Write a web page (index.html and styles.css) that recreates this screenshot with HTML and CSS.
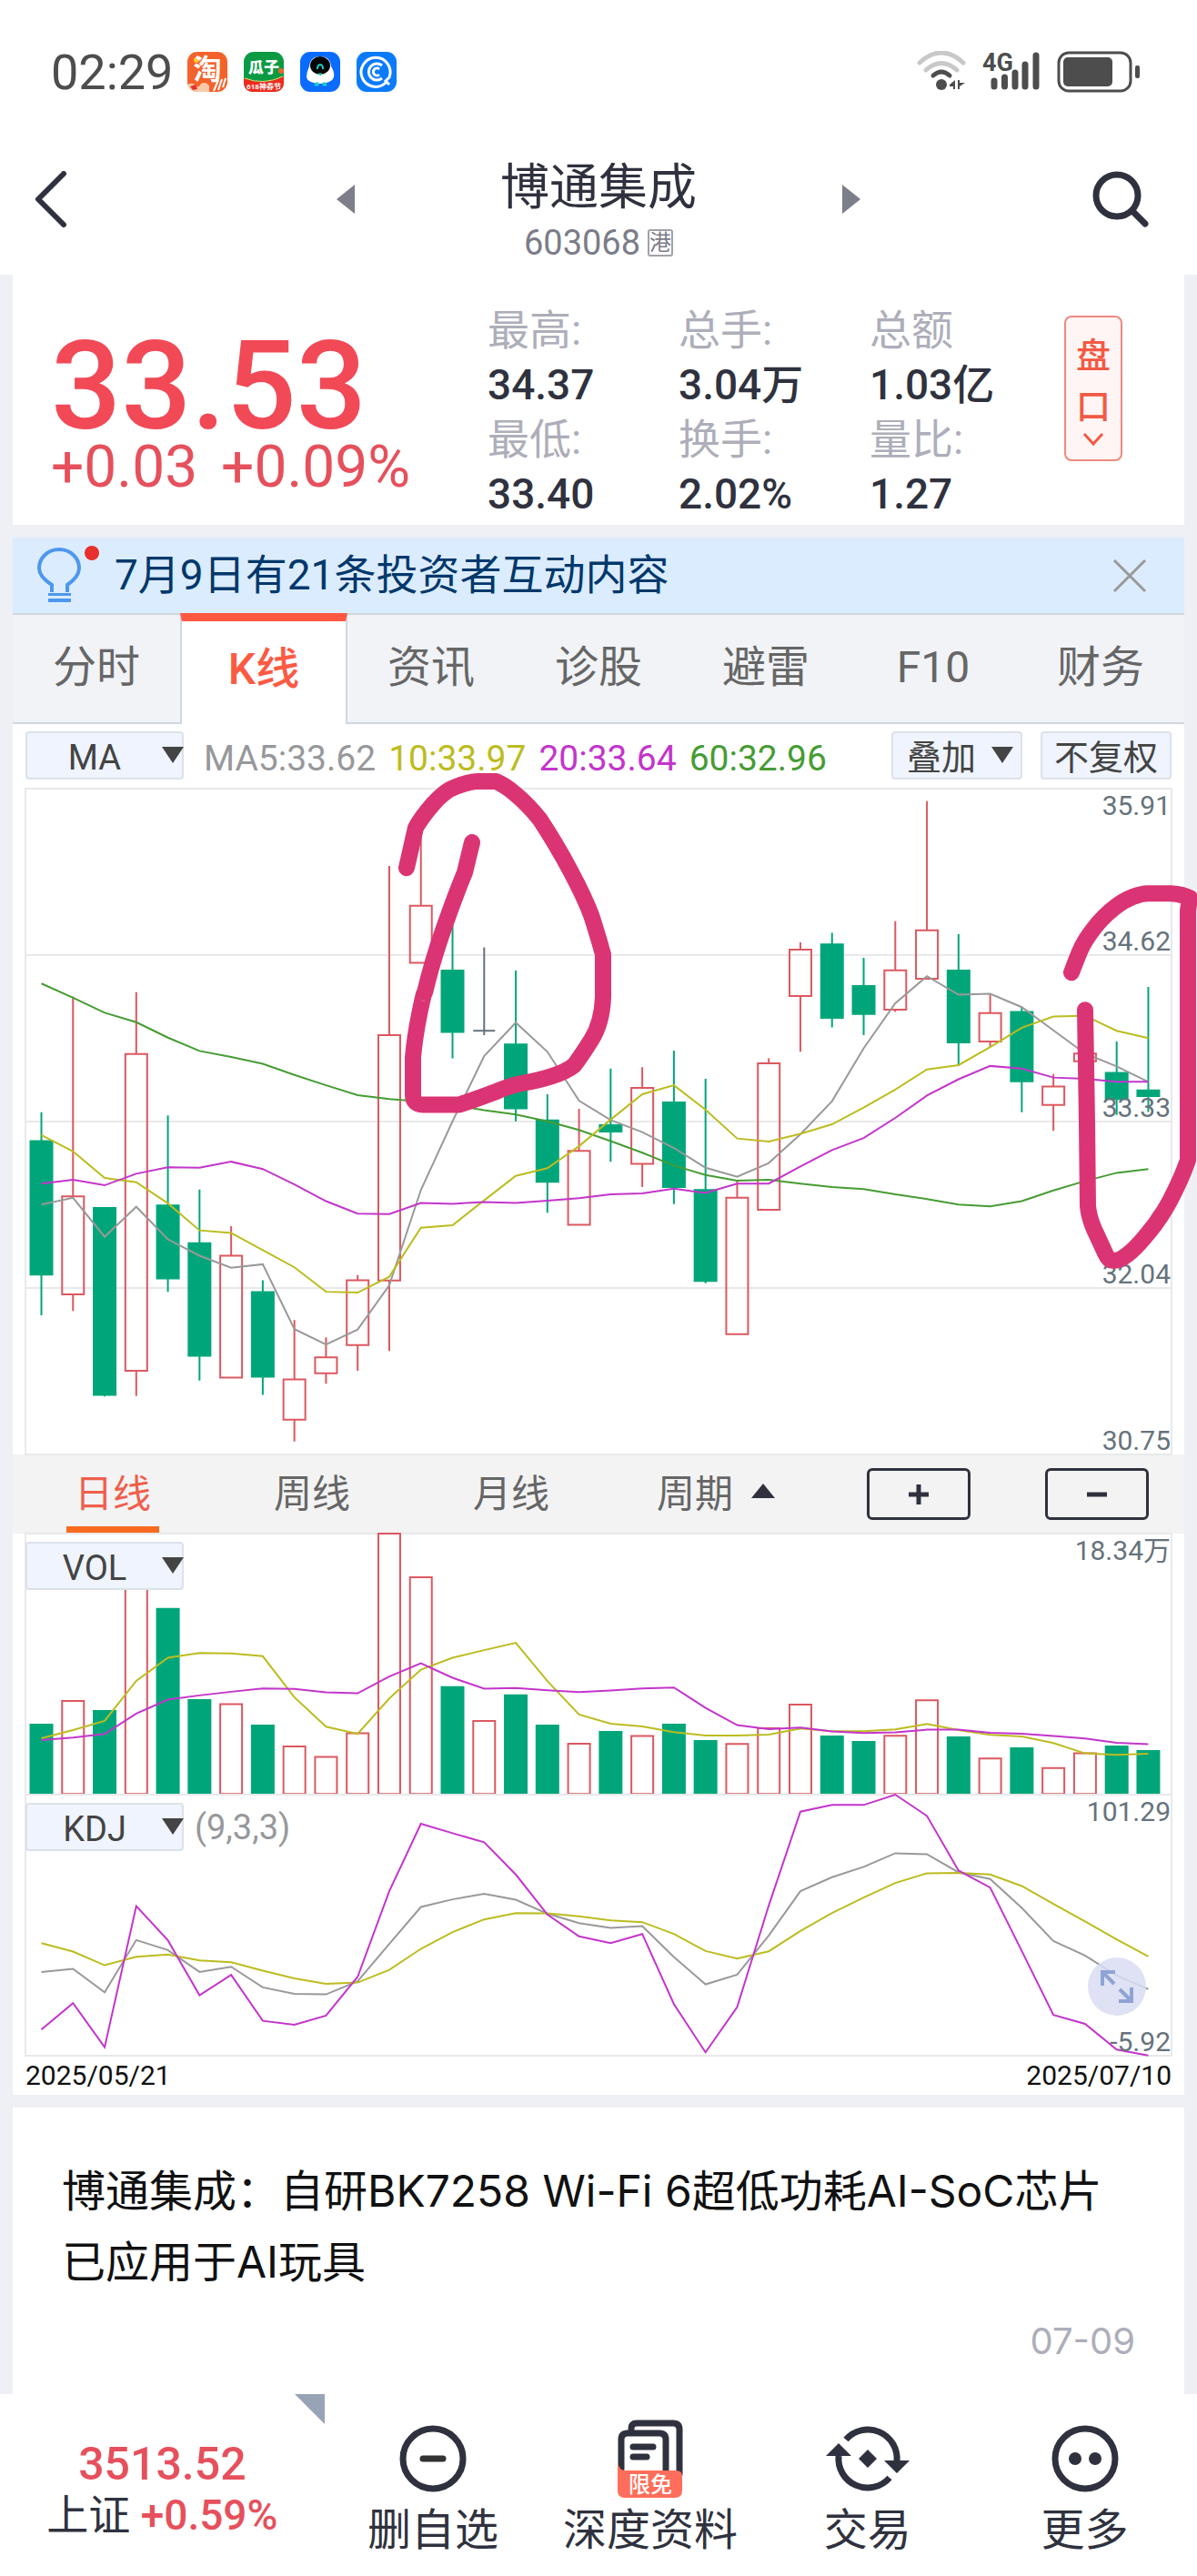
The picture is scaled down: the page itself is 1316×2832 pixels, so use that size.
FILE: index.html
```html
<!DOCTYPE html>
<html lang="zh-CN">

<head>
    <meta charset="UTF-8">
    <meta name="viewport" content="width=device-width, initial-scale=1">
    <title>博通集成 603068</title>
    <link rel="stylesheet" href="styles.css">
</head>

<body>
    <header class="top">
        <div class="status-bar">
            <span class="clock">02:29</span>
            <div class="app-icons">
                <svg width="44" height="44" viewBox="0 0 44 44">
                    <rect width="44" height="44" rx="11" fill="#f4622c"/>
                    <circle cx="10" cy="9" r="3" fill="#ffc928"/>
                    <text x="22" y="30" text-anchor="middle" font-size="31" font-weight="700" fill="#fff">淘</text>
                    <path d="M0 36q6-3 9 1t6-2q5-3 9 2v7H11Q3 44 0 36z" fill="#f8c9a8"/>
                    <path d="M3 38l6-2 2 5-5 1z" fill="#e5322b"/>
                    <path d="M29 43l5-12M34 42l4-12M39 39l3-10" stroke="#fff" stroke-width="2"/>
                </svg>
                <svg width="44" height="44" viewBox="0 0 44 44">
                    <rect width="44" height="44" rx="11" fill="#0a9a43"/>
                    <path d="M0 29q22 9 44-2v6q0 11-11 11H11Q0 44 0 33z" fill="#ee2b1f"/>
                    <path d="M1 29q21 8 42-2" fill="none" stroke="#f3d66a"/>
                    <circle cx="41" cy="21" r="3" fill="#f0642b"/>
                    <text x="22" y="23" text-anchor="middle" font-size="17" font-weight="900" fill="#fff">瓜子</text>
                    <text x="22" y="41" text-anchor="middle" font-size="8" font-weight="700" fill="#fff">618神券节</text>
                </svg>
                <svg width="44" height="44" viewBox="0 0 44 44">
                    <rect width="44" height="44" rx="11" fill="#0a6cff"/>
                    <path d="M10 16Q11 5 22 5t12 11q4 6 3 12-2 6-15 7Q8 34 7 28q0-6 3-12z" fill="#fff"/>
                    <ellipse cx="22" cy="15" rx="11" ry="10" fill="#050505"/>
                    <path d="M19 19q0-5 3-5t3 5" fill="none" stroke="#18cfc4" stroke-width="2"/>
                    <path d="M20 24h4l-2 2zM17 34h3v3h-4zM25 34h3l1 3h-4z" fill="#18cfc4" stroke="#18cfc4"/>
                </svg>
                <svg width="44" height="44" viewBox="0 0 44 44">
                    <rect width="44" height="44" rx="11" fill="#0b7bfb"/>
                    <g fill="none" stroke="#fff" stroke-width="3">
                        <path d="M32 34A16 16 0 1 1 36 28L32 32l4 4"/>
                        <path d="M28 29a9 9 0 1 1 0-14"/>
                        <path d="M25 25a4 4 0 1 1 0-6"/>
                    </g>
                </svg>
            </div>
            <div class="signal">
                <svg width="54" height="44" viewBox="0 0 54 44">
                    <g fill="none" stroke-width="5" stroke-linecap="round">
                        <path d="M3 13q24-22 48 0" stroke="#c8c8c8"/>
                        <path d="M10 21q17-15 34 0" stroke="#c8c8c8"/>
                        <path d="M18 27q9-8 18 0" stroke="#4d4d4d"/>
                    </g>
                    <circle cx="27" cy="37" r="6" fill="#4d4d4d"/>
                    <path d="M42 32v10h-2v-3h-4v-2zM45 32v10h2v-3l6-4h-6v-3z" fill="#4d4d4d"/>
                </svg>
                <svg class="net" width="64" height="44" viewBox="0 0 64 44">
                    <text x="0" y="22" font-size="27" font-weight="700" fill="#4d4d4d">4G</text>
                    <path d="M13 33v6M24.500 29v10M36 24v15M47 15v24M59 5v34" stroke="#4d4d4d" stroke-width="7" stroke-linecap="round"/>
                </svg>
                <svg width="92" height="46" viewBox="0 0 92 46">
                    <rect x="2" y="2" width="79" height="42" rx="11" fill="none" stroke="#4d4d4d" stroke-width="3"/>
                    <rect x="7" y="7" width="54" height="32" rx="5" fill="#4d4d4d"/>
                    <rect x="86" y="16" width="5" height="14" rx="2" fill="#4d4d4d"/>
                </svg>
            </div>
        </div>
        <div class="title-bar">
            <button class="icon-btn" aria-label="返回">
                <svg width="36" height="62" viewBox="0 0 36 62"><path d="M32 3L4 31l28 28" fill="none" stroke="#2f323e" stroke-width="6" stroke-linecap="round" stroke-linejoin="round"/></svg>
            </button>
            <div class="switcher">
                <button class="icon-btn" aria-label="上一只">
                    <svg width="20" height="32" viewBox="0 0 20 32"><path d="M20 0v32L0 16z" fill="#7c7e8a"/></svg>
                </button>
                <div class="stock">
                    <h1>博通集成</h1>
                    <p>603068<span class="hk-tag">港</span></p>
                </div>
                <button class="icon-btn" aria-label="下一只">
                    <svg width="20" height="32" viewBox="0 0 20 32"><path d="M0 0v32l20-16z" fill="#7c7e8a"/></svg>
                </button>
            </div>
            <button class="icon-btn search" aria-label="搜索">
                <svg width="64" height="64" viewBox="0 0 64 64"><g fill="none" stroke="#2f323e" stroke-width="7" stroke-linecap="round"><circle cx="28" cy="28" r="23"/><path d="M45 45l14 14"/></g></svg>
            </button>
        </div>
    </header>

    <main>
        <section class="card quote">
            <div class="price">
                <strong>33.53</strong>
                <p><span>+0.03</span><span>+0.09%</span></p>
            </div>
            <div class="stats">
                <dl>
                    <dt>最高:</dt><dd>34.37</dd>
                    <dt>最低:</dt><dd>33.40</dd>
                </dl>
                <dl>
                    <dt>总手:</dt><dd>3.04万</dd>
                    <dt>换手:</dt><dd>2.02%</dd>
                </dl>
                <dl>
                    <dt>总额</dt><dd>1.03亿</dd>
                    <dt>量比:</dt><dd>1.27</dd>
                </dl>
            </div>
            <button class="pankou">
                <span>盘</span><span>口</span>
                <svg width="24" height="16" viewBox="0 0 24 16"><path d="M2 2l10 11L22 2" fill="none" stroke="#f25a45" stroke-width="3"/></svg>
            </button>
        </section>

        <section class="card market">
            <div class="notice">
                <svg class="bulb" width="70" height="66" viewBox="0 0 70 66">
                    <path d="M17 51v-8Q3 34 3 24.500a22 20.500 0 0 1 44 0Q47 34 34 43v8" fill="none" stroke="#4d97ee" stroke-width="4"/>
                    <path d="M13 52h25v3H13zM13 58h25v4H13z" fill="#4d97ee"/>
                    <circle cx="61" cy="8" r="8" fill="#e72f2d"/>
                </svg>
                <a href="#">7月9日有21条投资者互动内容</a>
                <button class="icon-btn" aria-label="关闭">
                    <svg width="38" height="38" viewBox="0 0 38 38"><path d="M2 2l34 34M36 2L2 36" stroke="#999" stroke-width="3"/></svg>
                </button>
            </div>
            <nav class="tabs">
                <a href="#">分时</a>
                <a href="#" class="active">K线</a>
                <a href="#">资讯</a>
                <a href="#">诊股</a>
                <a href="#">避雷</a>
                <a href="#">F10</a>
                <a href="#">财务</a>
            </nav>

            <div class="ma-row">
                <label class="picker"><select aria-label="主图指标"><option>MA</option></select></label>
                <p class="ma-values">
                    <span class="c-grey">MA5:33.62</span>
                    <span class="c-yellow">10:33.97</span>
                    <span class="c-purple">20:33.64</span>
                    <span class="c-green">60:32.96</span>
                </p>
                <label class="picker picker-small"><select aria-label="叠加"><option>叠加</option></select></label>
                <button class="chip">不复权</button>
            </div>

            <div class="chart chart-k">
                <svg class="plot" id="kline" viewBox="0 15 1260 1551" preserveAspectRatio="none"></svg>
                <div class="scale">
                    <span>35.91</span><span>34.62</span><span>33.33</span><span>32.04</span><span>30.75</span>
                </div>
                <svg class="marker" viewBox="28 867 1260 731" preserveAspectRatio="none">
                    <path d="M447 954L457 910Q463 899 476 884T501 865Q516 859 526 859H545Q555 863 568 874T593 900Q611 927 627 957T650 1006Q657 1027 663 1049V1096Q662 1124 650 1143T631 1171Q622 1178 606 1183T577 1190T547 1199Q526 1207 505 1214H465Q454 1214 454 1203V1162Q456 1140 461 1115T467 1091Q475 1057 488 1020T511 959L519 926"/>
                    <path d="M1178 1069Q1182 1058 1187 1046T1203 1020T1226 997Q1235 990 1245 986T1262 982H1287Q1301 983 1308 987L1306 1001V1275Q1299 1295 1287 1318T1258 1360Q1248 1372 1239 1379T1224 1385Q1219 1386 1215 1377T1203 1351Q1197 1337 1196 1325L1195 1233L1193 1110"/>
                </svg>
            </div>

            <div class="periods">
                <button class="active">日线</button>
                <button>周线</button>
                <button>月线</button>
                <button class="more">周期<svg width="26" height="16" viewBox="0 0 26 16"><path d="M13 0l13 16H0z" fill="#2f323e"/></svg></button>
                <div class="zoom">
                    <button aria-label="放大"><svg width="24" height="24" viewBox="0 0 24 24"><path d="M12 1v22M1 12h22" stroke="#2f323e" stroke-width="5"/></svg></button>
                    <button aria-label="缩小"><svg width="24" height="24" viewBox="0 0 24 24"><path d="M1 12h22" stroke="#2f323e" stroke-width="5"/></svg></button>
                </div>
            </div>

            <div class="chart chart-sub">
                <svg class="plot" id="vol" viewBox="0 289 1260 860" preserveAspectRatio="none"></svg>
                <div class="sub-head"><label class="picker"><select aria-label="副图指标一"><option>VOL</option></select></label></div>
                <div class="scale"><span>18.34万</span></div>
            </div>
            <div class="chart chart-sub">
                <svg class="plot" id="kdj" viewBox="0 10 1260 860" preserveAspectRatio="none"></svg>
                <div class="sub-head">
                    <label class="picker"><select aria-label="副图指标二"><option>KDJ</option></select></label>
                    <span class="c-grey">(9,3,3)</span>
                </div>
                <button class="expand" aria-label="全屏">
                    <svg width="38" height="38" viewBox="0 0 38 38"><path d="M3 18V3h14M4 4l12 12M35 20v15H21M34 34L22 22" fill="none" stroke="#8fa3d4" stroke-width="4"/></svg>
                </button>
                <div class="scale"><span>101.29</span><span>-5.92</span></div>
            </div>
            <div class="dates"><time>2025/05/21</time><time>2025/07/10</time></div>
        </section>

        <article class="card news">
            <h2>博通集成：自研BK7258 Wi-Fi 6超低功耗AI-SoC芯片已应用于AI玩具</h2>
            <time>07-09</time>
        </article>
    </main>

    <footer class="bottom-bar">
        <a href="#" class="index">
            <strong>3513.52</strong>
            <span>上证 <em>+0.59%</em></span>
        </a>
        <button>
            <svg width="74" height="86" viewBox="0 0 74 86"><circle cx="37" cy="43" r="33" fill="none" stroke="#2f323e" stroke-width="7"/><path d="M26 43h22" stroke="#333" stroke-width="7" stroke-linecap="round"/></svg>
            删自选
        </button>
        <button>
            <svg width="72" height="86" viewBox="0 0 72 86">
                <g fill="none" stroke="#2f323e" stroke-width="7" stroke-linecap="round">
                    <path d="M15 12V10q0-6 6-6h40q7 0 7 7v49"/>
                    <path d="M4 54V22q0-7 7-7h35q7 0 7 7v38"/>
                    <path d="M17 30h22M17 41h15"/>
                </g>
                <path d="M0 46q1 10 9 10h55q7 0 7 6v16q0 8-8 8H8q-8 0-8-8z" fill="#ff6e5c"/>
                <text x="36" y="80" text-anchor="middle" font-size="24" font-weight="500" fill="#fff">限免</text>
            </svg>
            深度资料
        </button>
        <button>
            <svg width="92" height="86" viewBox="0 0 92 86">
                <g fill="none" stroke="#2f323e" stroke-width="7">
                    <path d="M22 22A32 32 0 0 1 78 46"/>
                    <path d="M70 64A32 32 0 0 1 14 40"/>
                </g>
                <path d="M0 40h28L14 26zM64 45h28L78 59zM46 33l10 10-10 10-10-10z" fill="#2f323e"/>
            </svg>
            交易
        </button>
        <button>
            <svg width="74" height="86" viewBox="0 0 74 86"><circle cx="37" cy="43" r="33" fill="none" stroke="#2f323e" stroke-width="7"/><circle cx="26" cy="43" r="7" fill="#2f323e"/><circle cx="48" cy="43" r="7" fill="#2f323e"/></svg>
            更多
        </button>
    </footer>
    <script src="chart.js"></script>
</body>

</html>
```
FILE: styles.css
```css
:root {
    --page: #eef0f5;
    --dark: #2f323e;
    --red: #e6505c;
    --accent: #fb5a43;
    --grey: #97989b;
    --yellow: #bcbc20;
    --purple: #c335cb;
    --green: #469c33;
    --line: #e8e9eb;
}

* {
    box-sizing: border-box;
}

body {
    margin: 0;
    background: var(--page);
    color: var(--dark);
    font-family: Roboto, "Noto Sans CJK SC", sans-serif;
    overflow-x: hidden;
}

h1, h2, p, dl, dd {
    margin: 0;
    font-weight: 400;
}

button, select {
    margin: 0;
    padding: 0;
    border: 0;
    background: none;
    color: inherit;
    font: inherit;
}

a {
    color: inherit;
    text-decoration: none;
}

svg {
    display: block;
}

.c-grey { color: var(--grey); }
.c-yellow { color: var(--yellow); }
.c-purple { color: var(--purple); }
.c-green { color: var(--green); }

/* header */
.top {
    background: #fff;
    padding-bottom: 10px;
}

.status-bar {
    display: flex;
    align-items: center;
    height: 158px;
    padding: 0 62px 0 56px;
}

.clock {
    font-size: 54px;
    color: #4d4d4d;
}

.app-icons {
    display: flex;
    gap: 18px;
    margin-left: 16px;
}

.signal {
    display: flex;
    gap: 18px;
    margin-left: auto;
}

.net {
    overflow: visible;
}

.title-bar {
    display: grid;
    grid-template-columns: 1fr auto 1fr;
    align-items: center;
    padding: 0 52px 0 38px;
}

.icon-btn {
    display: flex;
    align-items: center;
}

.title-bar .icon-btn {
    padding-bottom: 12px;
}

.switcher {
    display: flex;
    align-items: center;
    gap: 160px;
    padding-left: 14px;
}

.search {
    justify-self: end;
}

.stock {
    padding-top: 14px;
    text-align: center;
}

.stock h1 {
    font-size: 54px;
    line-height: 70px;
}

.stock p {
    display: flex;
    align-items: center;
    justify-content: center;
    gap: 8px;
    font-size: 38px;
    line-height: 50px;
    color: #7b7d88;
}

.hk-tag {
    border: 2px solid #a1a2a9;
    border-radius: 3px;
    font-size: 24px;
    line-height: 26px;
}

/* quote */
main {
    display: flex;
    flex-direction: column;
    gap: 14px;
    padding: 0 14px;
}

.card {
    background: #fff;
}

.quote {
    display: grid;
    grid-template-columns: 522fr 634fr auto;
    align-items: start;
    padding-bottom: 4px;
}

.price {
    padding: 68px 0 0 42px;
}

.price strong {
    display: block;
    font-size: 136px;
    line-height: 110px;
    font-weight: 500;
    color: #f24957;
}

.price p {
    display: flex;
    gap: 26px;
    font-size: 64px;
    line-height: 68px;
    color: var(--red);
    white-space: nowrap;
}

.stats {
    display: grid;
    grid-template-columns: repeat(3, 1fr);
    padding: 31px 4px 0 0;
    font-size: 46px;
    line-height: 60px;
}

.stats dt {
    color: #adaeb9;
}

.stats dd {
    font-weight: 500;
    white-space: nowrap;
}

.pankou {
    display: flex;
    flex-direction: column;
    align-items: center;
    width: 64px;
    margin: 45px 68px 0 0;
    padding: 14px 0;
    border: 2px solid #ec8b7e;
    border-radius: 8px;
    background: #fff5f4;
    color: #f25a45;
    font-size: 38px;
    font-weight: 500;
    line-height: 56px;
}

/* notice and tabs */
.notice {
    display: flex;
    align-items: center;
    height: 83px;
    padding: 0 41px 0 26px;
    background: #dbecfe;
    color: #01386b;
    font-size: 46px;
}

.notice a {
    margin: 0 auto 0 16px;
    padding-bottom: 10px;
}

.tabs {
    display: grid;
    grid-template-columns: repeat(7, 1fr);
    height: 122px;
    border-top: 2px solid #d0d7e1;
    background: #f1f3f7;
    color: #666;
    font-size: 48px;
    text-align: center;
    line-height: 116px;
}

.tabs a {
    border-bottom: 2px solid #d0d7de;
}

.tabs .active {
    margin-top: -2px;
    border: 2px solid #d0d7e1;
    border-top: 9px solid #ff5741;
    border-bottom: 0;
    background: #fff;
    color: var(--accent);
    font-weight: 500;
    line-height: 106px;
}

/* indicator selectors */
.ma-row {
    display: flex;
    align-items: center;
    padding: 8px 14px 10px;
    font-size: 39px;
}

.ma-values {
    display: flex;
    gap: 14px;
    margin: 0 auto 0 22px;
    padding-top: 6px;
    white-space: nowrap;
}

.picker {
    position: relative;
    width: 174px;
}

.picker select,
.chip {
    display: block;
    width: 100%;
    height: 53px;
    padding-top: 6px;
    border: 2px solid #dbe2ea;
    border-radius: 4px;
    background: #eff4fe;
    color: #444;
    font-size: 38px;
    line-height: 43px;
    text-align: center;
}

.picker select {
    appearance: none;
    padding-right: 22px;
}

.picker::after {
    content: "";
    position: absolute;
    top: 17px;
    right: 0;
    border: 12px solid transparent;
    border-top: 18px solid #444;
    border-bottom: 0;
    pointer-events: none;
}

.picker-small {
    width: 144px;
    margin-right: 20px;
}

.picker-small select {
    padding-right: 34px;
}

.picker-small::after {
    right: 10px;
}

.chip {
    width: 144px;
}

/* charts */
.chart {
    position: relative;
    margin: 0 14px;
}

.chart-k {
    height: 732px;
}

.chart-sub {
    height: 287px;
}

.plot,
.marker {
    position: absolute;
    inset: 0;
    width: 100%;
    height: 100%;
    overflow: visible;
}

.plot * {
    vector-effect: non-scaling-stroke;
    stroke-width: 2px;
}

.plot polyline {
    fill: none;
}

.grid { fill: none; stroke: var(--line); }
.up { fill: none; stroke: #dc5860; }
.down { fill: #00a67a; stroke: #00a67a; }
.flat { fill: none; stroke: #66737c; }
.l-grey { stroke: #999; }
.l-yellow { stroke: var(--yellow); }
.l-purple { stroke: var(--purple); }
.l-green { stroke: var(--green); }

.marker {
    z-index: 2;
    pointer-events: none;
}

.marker path {
    fill: none;
    stroke: #db3474;
    stroke-width: 18px;
    stroke-linecap: round;
    stroke-linejoin: round;
}

.scale {
    position: absolute;
    inset: 2px 1px -2px auto;
    display: flex;
    flex-direction: column;
    justify-content: space-between;
    color: #66737c;
    font-size: 30px;
    line-height: 34px;
    text-align: right;
}

.chart-k .scale span:not(:first-child) {
    flex: 1;
    display: flex;
    align-items: flex-end;
}

.chart-k .scale span:first-child {
    margin-bottom: -34px;
}

.sub-head {
    position: relative;
    display: flex;
    align-items: center;
    gap: 12px;
    padding-top: 9px;
    font-size: 38px;
}

.expand {
    position: absolute;
    right: 28px;
    bottom: 44px;
    display: grid;
    place-items: center;
    width: 64px;
    height: 64px;
    border-radius: 50%;
    background: rgba(216, 221, 242, 0.85);
}

.periods {
    display: grid;
    grid-template-columns: 220px 218px 220px 1fr auto;
    align-items: stretch;
    height: 87px;
    background: #f3f3f3;
    color: #666;
    font-size: 42px;
}

.periods > button {
    padding-bottom: 8px;
}

.periods .active {
    justify-self: center;
    width: 102px;
    border-top: 8px solid transparent;
    border-bottom: 8px solid #f96a1e;
    background-clip: padding-box;
    color: #ee5f4b;
}

.periods .more {
    display: flex;
    align-items: center;
    gap: 20px;
    padding-left: 50px;
}

.zoom {
    display: flex;
    align-items: center;
    gap: 82px;
    margin-right: 39px;
}

.zoom button {
    display: grid;
    place-items: center;
    width: 114px;
    height: 57px;
    border: 3px solid var(--dark);
    border-radius: 6px;
}

.dates {
    display: flex;
    justify-content: space-between;
    padding: 0 14px;
    color: #111;
    font-size: 30px;
    line-height: 43px;
}

/* news */
.news {
    padding: 53px 54px 34px;
    font-family: Inter, "Noto Sans CJK SC", sans-serif;
}

.news h2 {
    color: #111;
    font-size: 48px;
    line-height: 78px;
}

.news time {
    display: block;
    margin-top: 24px;
    color: #adaeb9;
    font-size: 40px;
    line-height: 48px;
    text-align: right;
}

/* bottom bar */
.bottom-bar {
    display: grid;
    grid-template-columns: 357fr repeat(4, 239fr);
    height: 200px;
    padding-right: 4px;
    background: #fff;
    font-size: 48px;
}

.bottom-bar button {
    display: flex;
    flex-direction: column;
    align-items: center;
    gap: 8px;
    padding-top: 28px;
    line-height: 56px;
}

.index {
    position: relative;
    padding-top: 49px;
    font-size: 46px;
    line-height: 56px;
    text-align: center;
}

.index::after {
    content: "";
    position: absolute;
    top: 0;
    right: 0;
    border-top: 33px solid #98a4b6;
    border-left: 33px solid transparent;
}

.index strong {
    display: block;
    font-size: 50px;
}

.index strong,
.index em {
    color: var(--red);
    font-style: normal;
    font-weight: 500;
}
```
FILE: chart.js
```js
// one row per day: type, high, body top, body bottom, low
const candles = [
    ['down', 769, 836, 1147, 1242],
    ['up', 499, 965, 1193, 1232],
    ['down', 992, 992, 1427, 1431],
    ['up', 489, 633, 1371, 1430],
    ['down', 776, 986, 1156, 1187],
    ['down', 949, 1074, 1336, 1394],
    ['up', 1034, 1103, 1387, 1387],
    ['down', 1160, 1188, 1385, 1427],
    ['up', 1253, 1391, 1485, 1536],
    ['up', 1293, 1340, 1377, 1401],
    ['up', 1148, 1160, 1311, 1371],
    ['up', 195, 589, 1161, 1325],
    ['up', 100, 288, 421, 421],
    ['down', 310, 439, 582, 643],
    ['flat', 385, 579, 579, 589],
    ['down', 439, 611, 760, 790],
    ['down', 727, 788, 931, 1003],
    ['up', 761, 859, 1031, 1031],
    ['down', 667, 799, 814, 884],
    ['up', 664, 712, 889, 943],
    ['down', 625, 746, 943, 983],
    ['down', 691, 950, 1162, 1167],
    ['up', 930, 968, 1286, 1286],
    ['up', 643, 655, 996, 996],
    ['up', 373, 390, 498, 628],
    ['down', 351, 378, 549, 571],
    ['down', 409, 475, 540, 589],
    ['up', 324, 438, 530, 535],
    ['up', 44, 345, 458, 458],
    ['down', 354, 439, 606, 660],
    ['up', 495, 538, 604, 617],
    ['down', 524, 535, 697, 769],
    ['up', 680, 709, 752, 812],
    ['up', 632, 632, 650, 650],
    ['down', 604, 677, 738, 775],
    ['down', 477, 718, 731, 768]
];

const volumes = [918, 840, 873, 400, 537, 837, 851, 921, 990, 1025, 947, 289, 433, 795, 906, 822, 921, 981,
    942, 956, 918, 972, 982, 930, 852, 957, 975, 955, 838, 960, 1030, 996, 1061, 1013, 990, 1005];

const maLines = {
    green: [469, 502, 537, 559, 595, 626, 640, 656, 682, 706, 729, 738, 744, 752, 764, 774, 790, 810,
        836, 863, 893, 915, 928, 926, 935, 943, 948, 960, 971, 984, 988, 976, 951, 929, 910, 901],
    grey: [984, 968, 1059, 989, 1065, 1103, 1131, 1123, 1274, 1310, 1275, 1172, 950, 790, 638, 560, 628, 742,
        787, 815, 852, 898, 919, 887, 820, 743, 620, 515, 452, 495, 493, 524, 578, 632, 662, 698],
    yellow: [822, 860, 922, 932, 981, 1044, 1050, 1090, 1130, 1187, 1189, 1152, 1038, 1032, 974, 917, 899, 848,
        786, 727, 706, 763, 830, 837, 819, 797, 758, 716, 669, 659, 617, 572, 546, 544, 579, 596],
    purple: [935, 926, 939, 912, 897, 898, 884, 901, 937, 976, 1005, 1006, 980, 982, 978, 980, 975, 969,
        960, 958, 947, 957, 935, 935, 895, 857, 829, 782, 730, 692, 661, 667, 688, 691, 698, 698]
};

const volLines = {
    yellow: [963, 936, 906, 774, 698, 682, 684, 693, 828, 925, 949, 832, 737, 698, 673, 649, 775, 885,
        915, 924, 943, 954, 954, 951, 931, 940, 940, 934, 916, 936, 952, 957, 979, 1013, 1018, 1014],
    purple: [969, 961, 949, 882, 836, 822, 810, 799, 801, 812, 815, 760, 716, 764, 800, 798, 805, 811,
        806, 799, 796, 863, 920, 933, 928, 941, 946, 944, 935, 935, 945, 948, 956, 964, 978, 983]
};

const kdjLines = {
    grey: [594, 584, 661, 489, 522, 594, 577, 645, 666, 668, 625, 502, 380, 355, 337, 356, 402, 433,
        449, 443, 545, 635, 603, 474, 328, 282, 248, 203, 206, 266, 288, 383, 492, 540, 606, 651],
    yellow: [499, 527, 572, 544, 537, 556, 562, 590, 615, 633, 629, 587, 518, 463, 421, 400, 401, 411,
        424, 430, 469, 525, 550, 526, 459, 400, 349, 301, 269, 268, 273, 311, 370, 428, 487, 543],
    purple: [784, 697, 842, 377, 490, 671, 604, 755, 768, 738, 610, 328, 106, 137, 167, 273, 405, 477,
        499, 469, 700, 859, 710, 375, 66, 44, 44, 10, 80, 260, 316, 525, 736, 765, 850, 869]
};

const dayX = i => 17.5 + i * 34.77;

function drawGrid(top, height, rows) {
    let out = `<rect class="grid" x="0" y="${top}" width="1260" height="${height}"/>`;
    for (let r = 1; r < rows; r++) {
        const y = top + height * r / rows;
        out += `<path class="grid" d="M0 ${y}H1260"/>`;
    }
    return out;
}

function drawLines(lines) {
    return Object.keys(lines).map(name => {
        const points = lines[name].map((y, i) => `${dayX(i)},${y}`).join(' ');
        return `<polyline class="l-${name}" points="${points}"/>`;
    }).join('');
}

function drawCandle([type, high, top, bottom, low], i) {
    const x = dayX(i);
    const wick = `<path class="${type}" d="M${x} ${high}V${top}M${x} ${bottom}V${low}"/>`;
    if (type === 'flat') {
        return wick + `<path class="flat" d="M${x - 12} ${top}H${x + 12}"/>`;
    }
    return wick + `<rect class="${type}" x="${x - 12}" y="${top}" width="24" height="${bottom - top}"/>`;
}

function drawVolume(top, i) {
    const type = candles[i][0] === 'down' ? 'down' : 'up';
    return `<rect class="${type}" x="${dayX(i) - 12}" y="${top}" width="24" height="${1147 - top}"/>`;
}

document.getElementById('kline').innerHTML = drawGrid(15, 1551, 4) + candles.map(drawCandle).join('') + drawLines(maLines);
document.getElementById('vol').innerHTML = drawGrid(289, 860, 1) + volumes.map(drawVolume).join('') + drawLines(volLines);
document.getElementById('kdj').innerHTML = drawGrid(10, 860, 1) + drawLines(kdjLines);
```
